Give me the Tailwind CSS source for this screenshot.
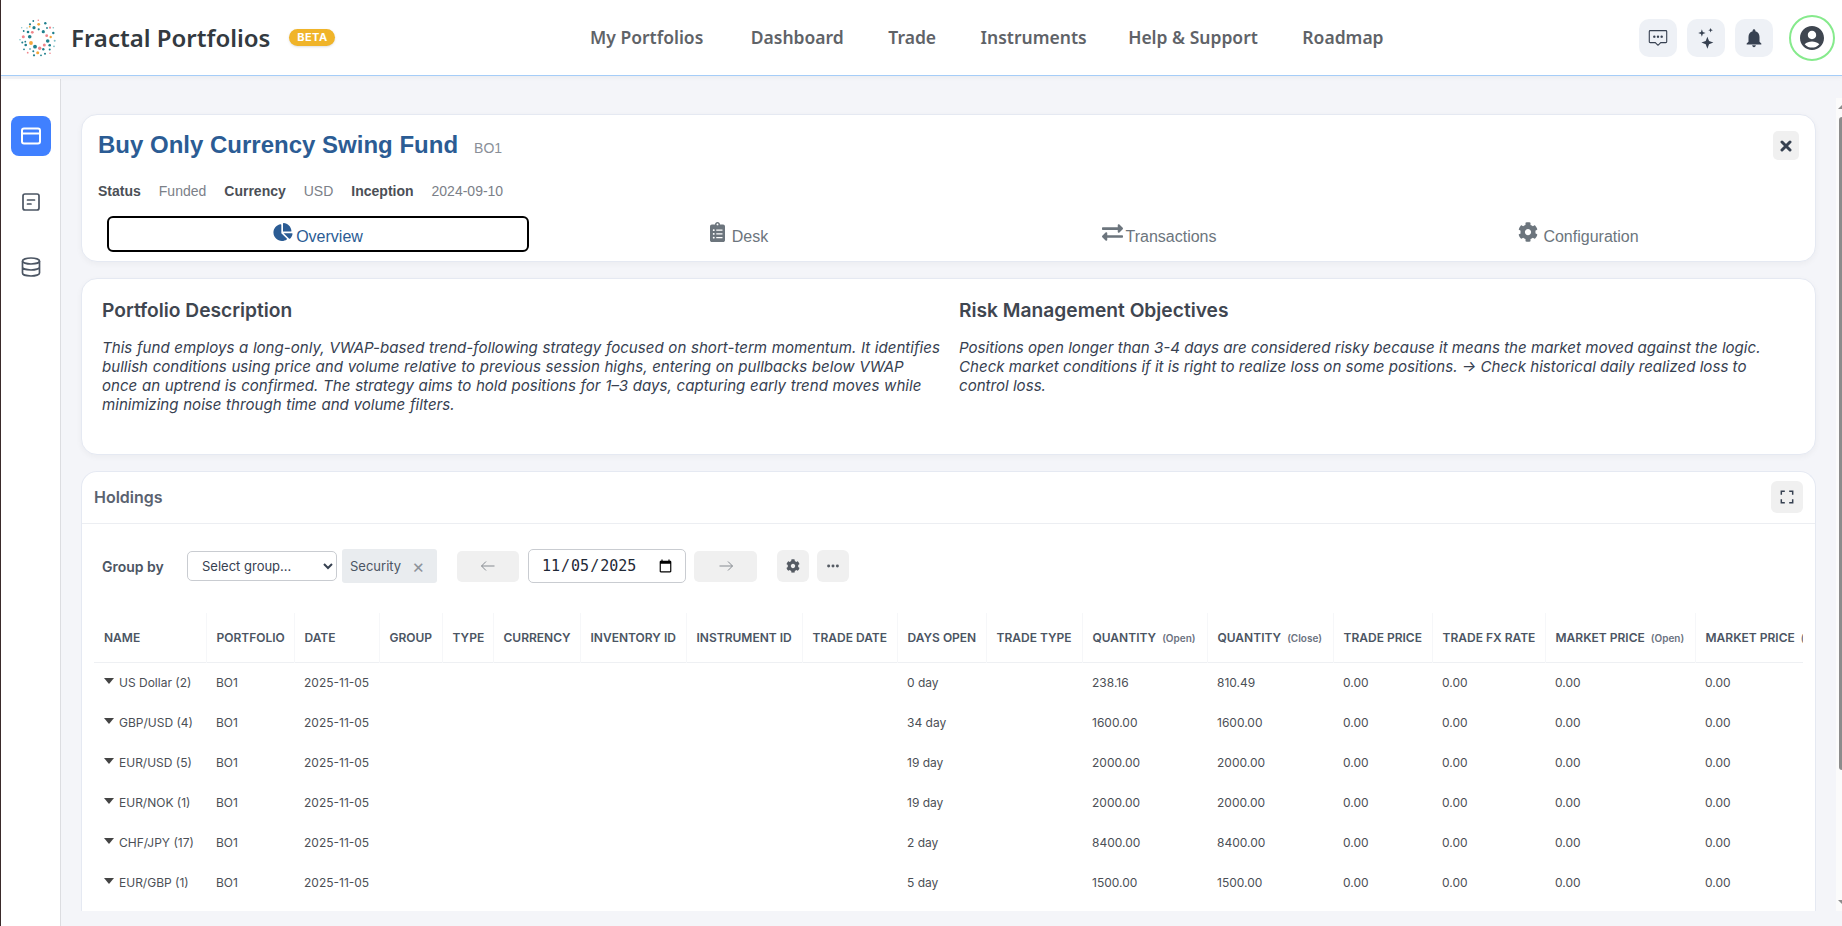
<!DOCTYPE html>
<html lang="en">
<head>
<meta charset="utf-8">
<title>Fractal Portfolios</title>
<script src="https://cdn.jsdelivr.net/npm/@tailwindcss/browser@4"></script>
</head>
<body class="h-screen w-screen overflow-hidden bg-[#f4f5f9] font-['Inter',sans-serif] text-[#374151]">
<div class="relative flex h-[926px] flex-col border-l border-[#3a2a2a]">
  <!-- top bar -->
  <header class="relative z-10 flex h-[76px] shrink-0 items-center border-b border-[#a5cdf8] bg-white shadow-[0_2px_4px_rgba(0,0,0,0.04)]">
    <div class="ml-[17px] flex w-[42px] shrink-0 items-center justify-center">
      <svg viewBox="0 0 42 38" class="h-[38px] w-[42px]">
        <g fill="#1f7f8c">
          <circle cx="16" cy="8.700" r="1.600"/><circle cx="25.300" cy="12.700" r="1.600"/><circle cx="11.700" cy="17.700" r="1.800"/><circle cx="29.700" cy="22" r="1.800"/><circle cx="17" cy="27.700" r="1.900"/><circle cx="31.700" cy="26.300" r="1.300"/><circle cx="7.700" cy="26" r="1.300"/><circle cx="20.700" cy="10.300" r="1.100"/><circle cx="35.300" cy="14" r="1.200"/><circle cx="27.300" cy="4.300" r="1.200"/><circle cx="4.300" cy="23.400" r="1"/><circle cx="7.300" cy="22.700" r="0.900"/><circle cx="10" cy="13" r="1.300"/><circle cx="5.700" cy="12" r="0.900"/><circle cx="12" cy="5.300" r="1.100"/><circle cx="16" cy="36.300" r="1.100"/><circle cx="6" cy="30.300" r="0.900"/><circle cx="25.300" cy="30.300" r="1.200"/><circle cx="31.700" cy="30.600" r="1"/><circle cx="27" cy="34.700" r="1"/><circle cx="15.300" cy="32.300" r="1"/><circle cx="23" cy="36.300" r="0.900"/><circle cx="15.300" cy="2" r="0.900"/><circle cx="29" cy="9" r="0.900"/><circle cx="12" cy="30" r="0.800"/></g>
        <g fill="#7fc0c8">
          <circle cx="36.700" cy="21.700" r="1"/><circle cx="36" cy="27.300" r="0.900"/><circle cx="2" cy="20.700" r="0.800"/><circle cx="3.700" cy="8.700" r="0.700"/><circle cx="35.300" cy="8.700" r="0.800"/><circle cx="9" cy="9" r="0.700"/></g>
        <g fill="#f4a63c">
          <circle cx="13" cy="24" r="1.900"/><circle cx="19.700" cy="33.700" r="1.500"/><circle cx="20.700" cy="5.300" r="1.400"/><circle cx="32.700" cy="18" r="1.200"/><circle cx="11.700" cy="7.700" r="0.900"/></g>
        <g fill="#f0868c">
          <circle cx="5.300" cy="17.700" r="1.500"/><circle cx="21.700" cy="29.300" r="1.700"/><circle cx="26.300" cy="26" r="1.500"/><circle cx="14.300" cy="13.300" r="1.400"/><circle cx="28.700" cy="16.700" r="1.400"/><circle cx="32" cy="8.700" r="1.100"/><circle cx="9.700" cy="33.700" r="0.900"/><circle cx="32" cy="34.300" r="0.800"/><circle cx="20.300" cy="1.300" r="0.800"/></g>
      </svg>
    </div>
    <span class="ml-[11px] font-['Noto_Sans',sans-serif] text-[24px] font-semibold leading-none text-[#333a40]">Fractal Portfolios</span>
    <span class="ml-[19px] flex h-[17px] w-[46px] items-center justify-center rounded-full bg-[#f0b429] text-[11px] font-bold tracking-[0.5px] text-white shadow-sm">BETA</span>
    <nav class="absolute left-[589px] flex items-center gap-[44.500px] font-['Noto_Sans',sans-serif] text-[17.500px] font-semibold text-[#5f6368]">
      <a class="mr-[3px]">My Portfolios</a><a>Dashboard</a><a>Trade</a><a>Instruments</a><a class="-ml-[3px]">Help &amp; Support</a><a>Roadmap</a>
    </nav>
    <div class="ml-auto flex items-center">
      <div class="flex items-center gap-[10px]">
        <button class="flex h-[38px] w-[38px] items-center justify-center rounded-[10px] bg-[#eef1f6]">
          <svg viewBox="0 0 24 24" class="h-[22px] w-[22px]" fill="none" stroke="#374151" stroke-width="1.200"><path d="M3.500 4h17a1 1 0 0 1 1 1v11a1 1 0 0 1-1 1h-5.500l-3 3-3-3H3.500a1 1 0 0 1-1-1V5a1 1 0 0 1 1-1z"/><circle cx="8" cy="10.500" r="0.700" fill="#374151"/><circle cx="12" cy="10.500" r="0.700" fill="#374151"/><circle cx="16" cy="10.500" r="0.700" fill="#374151"/></svg>
        </button>
        <button class="flex h-[38px] w-[38px] items-center justify-center rounded-[10px] bg-[#eef1f6]">
          <svg viewBox="0 0 24 24" class="h-[22px] w-[22px]" fill="#374151"><path d="M13.500 10.500l1.800 4.700 4.700 1.800-4.700 1.800-1.800 5-1.800-5-4.700-1.800 4.700-1.800z"/><path d="M7.500 2.500l1 3 3 1-3 1-1 3-1-3-3-1 3-1z"/><path d="M17 1l.7 1.800 1.800.7-1.800.7-.7 1.800-.7-1.800-1.800-.7 1.800-.7z"/></svg>
        </button>
        <button class="flex h-[38px] w-[38px] items-center justify-center rounded-[10px] bg-[#eef1f6]">
          <svg viewBox="0 0 24 24" class="h-[22px] w-[22px]" fill="#374151"><path d="M12 22c1.100 0 2-.9 2-2h-4c0 1.100.89 2 2 2zm6-6v-5c0-3.070-1.640-5.640-4.500-6.320V4c0-.83-.67-1.500-1.500-1.500s-1.500.67-1.500 1.500v.68C7.630 5.360 6 7.920 6 11v5l-2 2v1h16v-1l-2-2z"/></svg>
        </button>
      </div>
      <div class="ml-[16px] mr-[7px] flex h-[46px] w-[46px] items-center justify-center rounded-full border-2 border-[#86ea8c] bg-white">
        <svg viewBox="2 2 20 20" class="h-[24px] w-[24px]" fill="#3f4650"><path d="M12 2C6.480 2 2 6.480 2 12s4.480 10 10 10 10-4.480 10-10S17.520 2 12 2zm0 4c1.930 0 3.500 1.570 3.500 3.500S13.930 13 12 13s-3.500-1.570-3.500-3.500S10.070 6 12 6zm0 14c-2.030 0-4.430-.82-6.140-2.880C7.550 15.800 9.680 15 12 15s4.450.8 6.140 2.120C16.430 19.180 14.030 20 12 20z"/></svg>
      </div>
    </div>
  </header>

  <div class="flex min-h-0 flex-1">
    <!-- side rail -->
    <aside class="mt-[3px] flex w-[60px] shrink-0 flex-col items-center border-r border-[#dcdde1] bg-white pt-[37px]">
      <button class="flex h-[40px] w-[40px] items-center justify-center rounded-[8px] bg-[#4080ff]">
        <svg viewBox="0 0 24 24" class="h-[24px] w-[24px]" fill="none" stroke="#fff" stroke-width="2"><rect x="3" y="4.500" width="18" height="15" rx="2"/><path d="M3 9.500h18"/></svg>
      </button>
      <svg viewBox="0 0 24 24" class="mt-[34px] h-[24px] w-[24px]" fill="none" stroke="#4b5563" stroke-width="1.700" stroke-linecap="round"><rect x="4" y="4" width="16" height="16" rx="2"/><path d="M8.500 10h7M8.500 14h3.500"/></svg>
      <svg viewBox="0 0 24 24" class="mt-[41px] h-[24px] w-[24px]" fill="none" stroke="#4b5563" stroke-width="1.700"><ellipse cx="12" cy="6" rx="8.500" ry="3"/><path d="M3.500 6v12c0 1.700 3.800 3 8.500 3s8.500-1.300 8.500-3V6M3.500 12c0 1.700 3.800 3 8.500 3s8.500-1.300 8.500-3"/></svg>
    </aside>

    <main class="flex min-w-0 flex-1 flex-col gap-[16px] pl-[20px] pr-[26px] pt-[38px] pb-[15px]">
      <!-- portfolio heading card -->
      <section class="h-[148px] shrink-0 rounded-[16px] border border-[#e5e9f2] bg-white pl-[16px] pr-[16px] shadow-[0_2px_6px_rgba(0,0,0,0.04)] font-['Liberation_Sans',sans-serif]">
        <div class="flex items-start justify-between pt-[14px]">
          <div class="flex items-baseline">
            <h1 class="text-[24px] font-bold leading-[32px] text-[#2b5c94]">Buy Only Currency Swing Fund</h1>
            <span class="ml-[16px] text-[14px] text-[#8a8f98]">BO1</span>
          </div>
          <button class="mt-[2px] flex h-[29px] w-[26px] items-center justify-center rounded-[5px] bg-[#f0f0f0]">
            <svg viewBox="0 0 12 12" class="h-[12px] w-[12px]" stroke="#374151" stroke-width="3" stroke-linecap="round"><path d="M2 2l8 8M10 2l-8 8"/></svg>
          </button>
        </div>
        <div class="mt-[21px] flex items-center text-[14px] leading-[18px]">
          <b class="text-[#4b4f56]">Status</b><span class="ml-[18px] text-[#7b8088]">Funded</span>
          <b class="ml-[18px] text-[#4b4f56]">Currency</b><span class="ml-[18px] text-[#7b8088]">USD</span>
          <b class="ml-[18px] text-[#4b4f56]">Inception</b><span class="ml-[18px] text-[#7b8088]">2024-09-10</span>
        </div>
        <div class="ml-[9px] mr-[11px] mt-[16px] grid grid-cols-[422px_420px_420px_1fr] text-[16px] text-[#6c757d]">
          <a class="flex h-[36px] items-center justify-center gap-[3px] rounded-[6px] border-2 border-black text-[#2b5c94]">
            <svg viewBox="0 0 544 512" class="mb-[4px] h-[18px] w-[20px]" fill="#2b5c94"><path d="M527.790 288H290.500l158.030 158.030c6.040 6.040 15.980 6.530 22.190.68 38.700-36.460 65.320-85.610 73.130-140.860 1.340-9.460-6.510-17.850-16.060-17.850zm-15.830-64.800C503.720 103.740 408.260 8.280 288.800.04 279.680-.59 272 7.100 272 16.240V240h223.770c9.140 0 16.820-7.680 16.190-16.800zM224 288V50.710c0-9.550-8.390-17.400-17.840-16.060C86.990 51.490-4.100 155.600.14 280.370 4.500 408.510 114.830 513.590 243.030 511.980c50.400-.63 96.970-16.870 135.260-44.030 7.900-5.600 8.420-17.230 1.570-24.080L224 288z"/></svg>
            <span class="translate-y-[3px]">Overview</span>
          </a>
          <a class="flex h-[36px] items-center justify-center gap-[7px]">
            <svg viewBox="0 0 384 512" class="mb-[4px] h-[20px] w-[15px]" fill="#6c757d"><path d="M336 64h-80c0-35.300-28.700-64-64-64s-64 28.700-64 64H48C21.500 64 0 85.500 0 112v352c0 26.500 21.500 48 48 48h288c26.500 0 48-21.500 48-48V112c0-26.500-21.500-48-48-48zM96 424c-13.300 0-24-10.700-24-24s10.700-24 24-24 24 10.700 24 24-10.700 24-24 24zm0-96c-13.300 0-24-10.700-24-24s10.700-24 24-24 24 10.700 24 24-10.700 24-24 24zm0-96c-13.300 0-24-10.700-24-24s10.700-24 24-24 24 10.700 24 24-10.700 24-24 24zm96-192c13.300 0 24 10.700 24 24s-10.700 24-24 24-24-10.700-24-24 10.700-24 24-24zm128 368c0 4.400-3.600 8-8 8H168c-4.400 0-8-3.600-8-8v-16c0-4.400 3.600-8 8-8h144c4.400 0 8 3.600 8 8v16zm0-96c0 4.400-3.600 8-8 8H168c-4.400 0-8-3.600-8-8v-16c0-4.400 3.600-8 8-8h144c4.400 0 8 3.600 8 8v16zm0-96c0 4.400-3.600 8-8 8H168c-4.400 0-8-3.600-8-8v-16c0-4.400 3.600-8 8-8h144c4.400 0 8 3.600 8 8v16z"/></svg>
            <span class="translate-y-[3px]">Desk</span>
          </a>
          <a class="flex h-[36px] items-center justify-center gap-[3px]">
            <svg viewBox="0 0 512 512" class="mb-[4px] h-[21px] w-[21px]" fill="#6c757d"><path d="M0 168v-16c0-13.255 10.745-24 24-24h360V80c0-21.367 25.899-32.042 40.971-16.971l80 80c9.372 9.373 9.372 24.569 0 33.941l-80 80C409.956 271.982 384 261.456 384 240v-48H24c-13.255 0-24-10.745-24-24zm488 152H128v-48c0-21.314-25.862-32.080-40.971-16.971l-80 80c-9.372 9.373-9.372 24.569 0 33.941l80 80C102.057 463.997 128 453.437 128 432v-48h360c13.255 0 24-10.745 24-24v-16c0-13.255-10.745-24-24-24z"/></svg>
            <span class="translate-y-[3px]">Transactions</span>
          </a>
          <a class="flex h-[36px] items-center justify-center gap-[5px]">
            <svg viewBox="0 0 512 512" class="mb-[4px] h-[20px] w-[20px]" fill="#6c757d"><path d="M487.400 315.700l-42.600-24.600c4.300-23.200 4.300-47 0-70.200l42.600-24.600c4.900-2.800 7.100-8.600 5.500-14-11.100-35.600-30-67.800-54.700-94.600-3.800-4.100-10-5.100-14.800-2.300L380.800 110c-17.900-15.400-38.500-27.300-60.800-35.100V25.800c0-5.600-3.900-10.500-9.400-11.700-36.700-8.200-74.300-7.800-109.200 0-5.500 1.200-9.400 6.100-9.400 11.700V75c-22.200 7.900-42.800 19.800-60.800 35.100L88.700 85.500c-4.900-2.800-11-1.900-14.800 2.300-24.700 26.700-43.600 58.900-54.700 94.600-1.700 5.400.6 11.200 5.500 14L67.300 221c-4.300 23.200-4.300 47 0 70.200l-42.600 24.600c-4.900 2.800-7.100 8.600-5.500 14 11.100 35.600 30 67.800 54.700 94.600 3.800 4.100 10 5.100 14.800 2.300l42.600-24.600c17.900 15.400 38.500 27.300 60.800 35.100v49.200c0 5.600 3.900 10.500 9.400 11.700 36.700 8.200 74.300 7.800 109.200 0 5.500-1.200 9.400-6.100 9.400-11.700v-49.200c22.200-7.900 42.800-19.800 60.800-35.100l42.600 24.600c4.900 2.800 11 1.900 14.800-2.300 24.700-26.700 43.600-58.900 54.700-94.600 1.500-5.500-.7-11.300-5.600-14.100zM256 336c-44.100 0-80-35.900-80-80s35.900-80 80-80 80 35.900 80 80-35.900 80-80 80z"/></svg>
            <span class="translate-y-[3px]">Configuration</span>
          </a>
        </div>
      </section>

      <!-- description card -->
      <section class="grid h-[177px] shrink-0 grid-cols-[842px_1fr] gap-[15px] rounded-[16px] border border-[#e5e9f2] bg-white pl-[20px] pr-[24px] pt-[18px] shadow-[0_2px_6px_rgba(0,0,0,0.04)]">
        <div>
          <h2 class="text-[19.200px] font-semibold leading-[26px] text-[#3f4650]">Portfolio Description</h2>
          <p class="mt-[15px] w-[840px] text-[15.100px] italic leading-[19px] text-[#374151] [word-spacing:0.4px]">This fund employs a long-only, VWAP-based trend-following strategy focused on short-term momentum. It identifies bullish conditions using price and volume relative to previous session highs, entering on pullbacks below VWAP<br>once an uptrend is confirmed. The strategy aims to hold positions for 1–3 days, capturing early trend moves while minimizing noise through time and volume filters.</p>
        </div>
        <div>
          <h2 class="text-[19.200px] font-semibold leading-[26px] text-[#3f4650]">Risk Management Objectives</h2>
          <p class="mt-[15px] text-[15.100px] italic leading-[19px] text-[#374151]">Positions open longer than 3-4 days are considered risky because it means the market moved against the logic. Check market conditions if it is right to realize loss on some positions. → Check historical daily realized loss to control loss.</p>
        </div>
      </section>

      <!-- holdings card -->
      <section class="flex min-h-0 flex-1 flex-col overflow-hidden rounded-t-[16px] border-x border-t border-[#e5e9f2] bg-white">
        <div class="flex h-[52px] shrink-0 items-center justify-between border-b border-[#eceef2] pb-[2px] pl-[12px] pr-[12px]">
          <h3 class="text-[16px] font-semibold text-[#5a6270]">Holdings</h3>
          <button class="flex h-[32px] w-[32px] items-center justify-center rounded-[6px] bg-[#f0f0f0]">
            <svg viewBox="0 0 16 16" class="h-[14px] w-[14px]" fill="none" stroke="#374151" stroke-width="1.700"><path d="M1.500 5.500v-4h4M10.500 1.500h4v4M14.500 10.500v4h-4M5.500 14.500h-4v-4"/></svg>
          </button>
        </div>
        <div class="flex h-[89px] shrink-0 items-center pb-[5px] pl-[20px]">
          <span class="w-[85px] text-[14px] font-semibold text-[#4b5563]">Group by</span>
          <select class="h-[30px] w-[150px] rounded-[5px] border border-[#c9ccd1] bg-white pl-[10px] text-[13px] text-[#374151]"><option>Select group...</option></select>
          <div class="ml-[5px] flex h-[34px] w-[95px] items-center rounded-[3px] bg-[#e9ecef] pl-[8px] text-[13px] text-[#4b5563]"><span class="translate-y-[1px]">Security</span><span class="ml-[11px] text-[19px] leading-none text-[#8d939b]">×</span></div>
          <button class="ml-[20px] flex h-[31px] w-[62px] items-center justify-center rounded-[5px] bg-[#f0f0f0]">
            <svg viewBox="0 0 16 16" class="h-[16px] w-[16px]" fill="none" stroke="#868b91" stroke-width="1"><path d="M14.500 8h-13M6 3.500L1.500 8 6 12.500"/></svg>
          </button>
          <input type="date" value="2025-11-05" class="ml-[9px] h-[34px] w-[158px] rounded-[5px] border border-[#c9ccd1] bg-white pl-[12px] pr-[10px] font-['DejaVu_Sans_Mono',monospace] text-[15px] text-[#1f2937]">
          <button class="ml-[8px] flex h-[31px] w-[63px] items-center justify-center rounded-[5px] bg-[#f0f0f0]">
            <svg viewBox="0 0 16 16" class="h-[16px] w-[16px]" fill="none" stroke="#868b91" stroke-width="1"><path d="M1.500 8h13M10 3.500L14.500 8 10 12.500"/></svg>
          </button>
          <button class="ml-[20px] flex h-[32px] w-[32px] items-center justify-center rounded-[6px] bg-[#f0f0f0]">
            <svg viewBox="0 0 512 512" class="h-[14px] w-[14px]" fill="#555b63"><path d="M487.400 315.700l-42.600-24.600c4.300-23.200 4.300-47 0-70.200l42.600-24.600c4.900-2.800 7.100-8.600 5.500-14-11.100-35.600-30-67.800-54.700-94.600-3.800-4.100-10-5.100-14.800-2.300L380.800 110c-17.900-15.400-38.500-27.300-60.800-35.100V25.800c0-5.600-3.900-10.500-9.400-11.700-36.700-8.200-74.300-7.800-109.200 0-5.500 1.200-9.400 6.100-9.400 11.700V75c-22.200 7.900-42.800 19.800-60.800 35.100L88.700 85.500c-4.900-2.800-11-1.900-14.800 2.300-24.700 26.700-43.600 58.900-54.700 94.600-1.700 5.400.6 11.200 5.500 14L67.300 221c-4.300 23.200-4.300 47 0 70.200l-42.600 24.600c-4.900 2.800-7.100 8.600-5.500 14 11.100 35.600 30 67.800 54.700 94.600 3.800 4.100 10 5.100 14.800 2.300l42.600-24.600c17.900 15.400 38.500 27.300 60.800 35.100v49.200c0 5.600 3.900 10.500 9.400 11.700 36.700 8.200 74.300 7.800 109.200 0 5.500-1.200 9.400-6.100 9.400-11.700v-49.200c22.200-7.900 42.800-19.800 60.800-35.100l42.600 24.600c4.900 2.800 11 1.900 14.800-2.300 24.700-26.700 43.600-58.900 54.700-94.600 1.500-5.500-.7-11.300-5.600-14.100zM256 336c-44.100 0-80-35.900-80-80s35.900-80 80-80 80 35.900 80 80-35.900 80-80 80z"/></svg>
          </button>
          <button class="ml-[8px] flex h-[32px] w-[32px] items-center justify-center rounded-[6px] bg-[#f0f0f0]">
            <svg viewBox="0 0 16 16" class="h-[14px] w-[14px]" fill="#555b63"><circle cx="3" cy="8" r="1.700"/><circle cx="8" cy="8" r="1.700"/><circle cx="13" cy="8" r="1.700"/></svg>
          </button>
        </div>
        <div class="ml-[12px] mr-[12px] min-h-0 flex-1 overflow-hidden">
          <table class="w-[1760px] table-fixed border-collapse text-left text-[12px]">
            <colgroup>
              <col class="w-[112px]"><col class="w-[88px]"><col class="w-[85px]"><col class="w-[63px]"><col class="w-[51px]"><col class="w-[87px]"><col class="w-[106px]"><col class="w-[116px]"><col class="w-[95px]"><col class="w-[89px]"><col class="w-[96px]"><col class="w-[125px]"><col class="w-[126px]"><col class="w-[99px]"><col class="w-[113px]"><col class="w-[150px]"><col class="w-[159px]">
            </colgroup>
            <thead class="text-[12px] font-semibold text-[#4b5563]">
              <tr class="h-[49px] border-b border-[#eef0f3] [&>th]:border-r [&>th]:border-[#f6f7f9] [&>th]:pl-[10px] [&>th]:pt-[2px] [&>th]:font-semibold [&>th]:whitespace-nowrap">
                <th>NAME</th><th>PORTFOLIO</th><th>DATE</th><th>GROUP</th><th>TYPE</th><th>CURRENCY</th><th>INVENTORY ID</th><th>INSTRUMENT ID</th><th>TRADE DATE</th><th>DAYS OPEN</th><th>TRADE TYPE</th>
                <th>QUANTITY <span class="ml-[3px] text-[10px] text-[#6b7280]">(Open)</span></th>
                <th>QUANTITY <span class="ml-[3px] text-[10px] text-[#6b7280]">(Close)</span></th>
                <th>TRADE PRICE</th><th>TRADE FX RATE</th>
                <th>MARKET PRICE <span class="ml-[3px] text-[10px] text-[#6b7280]">(Open)</span></th>
                <th>MARKET PRICE <span class="ml-[3px] text-[10px] text-[#6b7280]">(Close)</span></th>
              </tr>
            </thead>
            <tbody class="text-[#4b4f56] [&_tr]:h-[40px] [&_tr:first-child]:h-[41px] [&_td]:pl-[10px] [&_td]:whitespace-nowrap">
              <tr><td><span class="mr-[5px] inline-block h-0 w-0 -translate-y-[3px] border-x-[5px] border-t-[6px] border-x-transparent border-t-[#444]"></span>US Dollar (2)</td><td>BO1</td><td>2025-11-05</td><td></td><td></td><td></td><td></td><td></td><td></td><td>0 day</td><td></td><td>238.16</td><td>810.49</td><td>0.00</td><td>0.00</td><td>0.00</td><td>0.00</td></tr>
              <tr><td><span class="mr-[5px] inline-block h-0 w-0 -translate-y-[3px] border-x-[5px] border-t-[6px] border-x-transparent border-t-[#444]"></span>GBP/USD (4)</td><td>BO1</td><td>2025-11-05</td><td></td><td></td><td></td><td></td><td></td><td></td><td>34 day</td><td></td><td>1600.00</td><td>1600.00</td><td>0.00</td><td>0.00</td><td>0.00</td><td>0.00</td></tr>
              <tr><td><span class="mr-[5px] inline-block h-0 w-0 -translate-y-[3px] border-x-[5px] border-t-[6px] border-x-transparent border-t-[#444]"></span>EUR/USD (5)</td><td>BO1</td><td>2025-11-05</td><td></td><td></td><td></td><td></td><td></td><td></td><td>19 day</td><td></td><td>2000.00</td><td>2000.00</td><td>0.00</td><td>0.00</td><td>0.00</td><td>0.00</td></tr>
              <tr><td><span class="mr-[5px] inline-block h-0 w-0 -translate-y-[3px] border-x-[5px] border-t-[6px] border-x-transparent border-t-[#444]"></span>EUR/NOK (1)</td><td>BO1</td><td>2025-11-05</td><td></td><td></td><td></td><td></td><td></td><td></td><td>19 day</td><td></td><td>2000.00</td><td>2000.00</td><td>0.00</td><td>0.00</td><td>0.00</td><td>0.00</td></tr>
              <tr><td><span class="mr-[5px] inline-block h-0 w-0 -translate-y-[3px] border-x-[5px] border-t-[6px] border-x-transparent border-t-[#444]"></span>CHF/JPY (17)</td><td>BO1</td><td>2025-11-05</td><td></td><td></td><td></td><td></td><td></td><td></td><td>2 day</td><td></td><td>8400.00</td><td>8400.00</td><td>0.00</td><td>0.00</td><td>0.00</td><td>0.00</td></tr>
              <tr><td><span class="mr-[5px] inline-block h-0 w-0 -translate-y-[3px] border-x-[5px] border-t-[6px] border-x-transparent border-t-[#444]"></span>EUR/GBP (1)</td><td>BO1</td><td>2025-11-05</td><td></td><td></td><td></td><td></td><td></td><td></td><td>5 day</td><td></td><td>1500.00</td><td>1500.00</td><td>0.00</td><td>0.00</td><td>0.00</td><td>0.00</td></tr>
            </tbody>
          </table>
        </div>
      </section>
    </main>
  </div>

  <!-- page scrollbar, over the content -->
  <div class="absolute right-0 top-[98px] h-[813px] w-[6px] bg-[#fbfbfb]">
    <div class="absolute right-0 top-[7px] h-0 w-0 border-b-[4px] border-l-[4px] border-b-[#8c8c8c] border-l-transparent"></div>
    <div class="absolute right-0 top-[19px] h-[653px] w-[3px] rounded-tl-[3px] rounded-bl-[3px] bg-[#8c8c8c]"></div>
    <div class="absolute right-0 bottom-[7px] h-0 w-0 border-t-[4px] border-l-[4px] border-t-[#8c8c8c] border-l-transparent"></div>
  </div>
</div>
</body>
</html>
